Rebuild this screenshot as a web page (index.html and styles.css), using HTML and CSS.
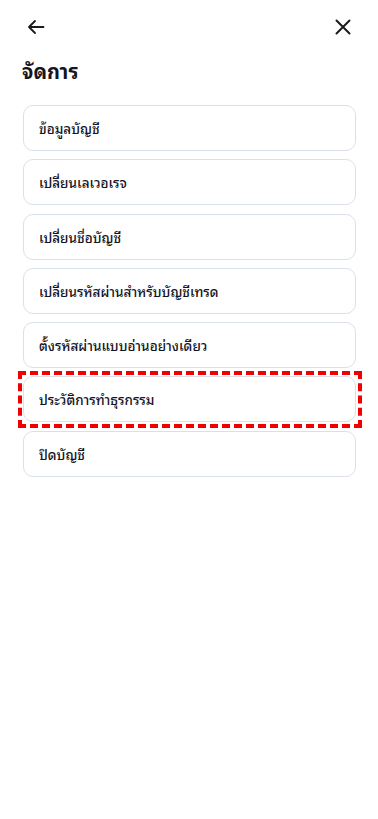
FILE: index.html
```html
<!DOCTYPE html>
<html lang="th">
<head>
<meta charset="utf-8">
<title>จัดการ</title>
<link rel="stylesheet" href="styles.css">
</head>
<body>
<div class="page">
  <header class="topbar">
    <button class="icon-btn" aria-label="back">
      <svg width="20" height="20" viewBox="0 0 20 20" fill="none" stroke="#1b1b1f" stroke-width="1.8" stroke-linecap="round" stroke-linejoin="round"><path d="M17.5 10H3M9 4L3 10L9 16"/></svg>
    </button>
    <button class="icon-btn" aria-label="close">
      <svg width="20" height="20" viewBox="0 0 20 20" fill="none" stroke="#1b1b1f" stroke-width="2" stroke-linecap="round"><path d="M3.5 3.5L16.5 16.5M16.5 3.5L3.5 16.5"/></svg>
    </button>
  </header>
  <h1 class="title">จัดการ</h1>
  <ul class="menu">
    <li class="item">ข้อมูลบัญชี</li>
    <li class="item">เปลี่ยนเลเวอเรจ</li>
    <li class="item">เปลี่ยนชื่อบัญชี</li>
    <li class="item">เปลี่ยนรหัสผ่านสำหรับบัญชีเทรด</li>
    <li class="item">ตั้งรหัสผ่านแบบอ่านอย่างเดียว</li>
    <li class="item highlighted">ประวัติการทำธุรกรรม</li>
    <li class="item">ปิดบัญชี</li>
  </ul>
</div>
</body>
</html>
```
FILE: styles.css
```css
* { box-sizing: border-box; }
html, body { margin: 0; padding: 0; background: #fff; }
body {
  font-family: "Noto Sans Thai Looped", Tahoma, "Noto Sans", "DejaVu Sans", sans-serif;
  color: #15151f;
}
.page { padding: 0 22px 0 22px; }
.topbar {
  display: flex;
  justify-content: space-between;
  align-items: center;
  height: 54px;
  padding: 0 1px 0 2px;
}
.icon-btn {
  background: none;
  border: 0;
  padding: 0;
  width: 24px;
  height: 24px;
  display: flex;
  align-items: center;
  justify-content: center;
  cursor: pointer;
}
.title {
  margin: 2px 0 0;
  font-size: 20px;
  font-weight: 700;
  line-height: 28px;
}
.menu {
  list-style: none;
  margin: 21px 0 0;
  padding: 0 0 0 1px;
  display: flex;
  flex-direction: column;
  gap: 8.3px;
}
.item {
  height: 46px;
  border: 1px solid #d9e0ec;
  border-radius: 10px;
  padding: 0 15px;
  display: flex;
  align-items: center;
  font-size: 13.5px;
  font-weight: 500;
  position: relative;
}
.item.highlighted::after {
  content: "";
  position: absolute;
  left: -6px;
  right: -7px;
  top: -6px;
  bottom: -7px;
  border: 4px dashed #f00000;
}
```
